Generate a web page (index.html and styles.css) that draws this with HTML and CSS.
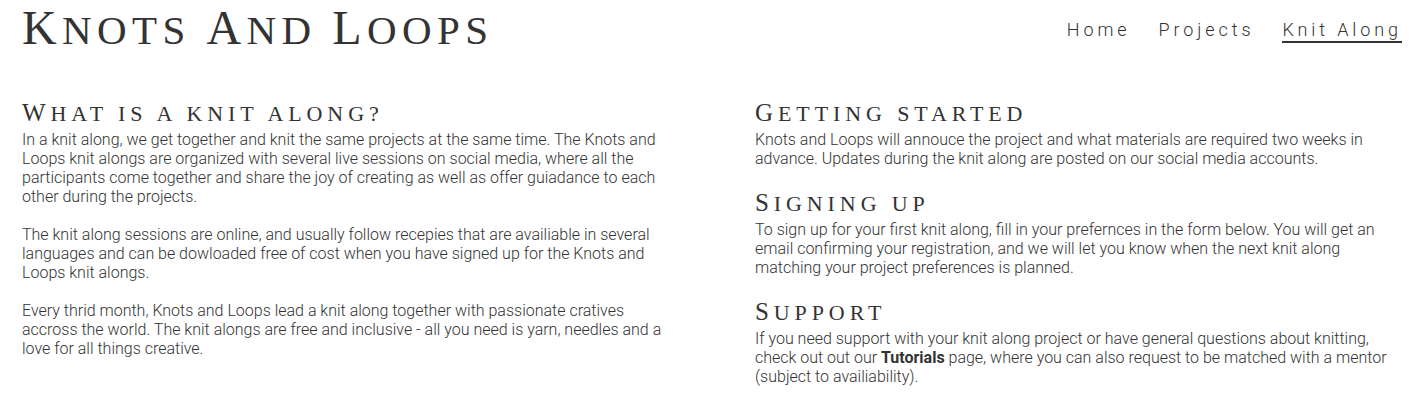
FILE: index.html
```html
<!DOCTYPE html>
<html lang="en">
<head>
<meta charset="utf-8">
<title>Knots And Loops – Knit Along</title>
<link rel="stylesheet" href="styles.css">
</head>
<body>
<header class="site-header">
  <h1 class="logo"><span class="word">Knots</span> <span class="word">And</span> <span class="word">Loops</span></h1>
  <nav class="nav">
    <a class="nav-link" href="#">Home</a>
    <a class="nav-link" href="#">Projects</a>
    <a class="nav-link active" href="#">Knit Along</a>
  </nav>
</header>
<main class="content">
  <section class="column">
    <h2 class="section-title">What is a knit along?</h2>
    <p>In a knit along, we get together and knit the same projects at the same time. The Knots and Loops knit alongs are organized with several live sessions on social media, where all the participants come together and share the joy of creating as well as offer guiadance to each other during the projects.</p>
    <p>The knit along sessions are online, and usually follow recepies that are availiable in several languages and can be dowloaded free of cost when you have signed up for the Knots and Loops knit alongs.</p>
    <p>Every thrid month, Knots and Loops lead a knit along together with passionate cratives accross the world. The knit alongs are free and inclusive - all you need is yarn, needles and a love for all things creative.</p>
  </section>
  <section class="column">
    <div class="block">
      <h2 class="section-title">Getting started</h2>
      <p>Knots and Loops will annouce the project and what materials are required two weeks in advance. Updates during the knit along are posted on our social media accounts.</p>
    </div>
    <div class="block">
      <h2 class="section-title">Signing up</h2>
      <p>To sign up for your first knit along, fill in your prefernces in the form below. You will get an email confirming your registration, and we will let you know when the next knit along matching your project preferences is planned.</p>
    </div>
    <div class="block">
      <h2 class="section-title">Support</h2>
      <p>If you need support with your knit along project or have general questions about knitting, check out out our <strong>Tutorials</strong> page, where you can also request to be matched with a mentor (subject to availiability).</p>
    </div>
  </section>
</main>
</body>
</html>
```

FILE: styles.css
```css
* { box-sizing: border-box; }

html, body {
  margin: 0;
  padding: 0;
  background: #ffffff;
}

body {
  font-family: Roboto, "Liberation Sans", sans-serif;
  font-weight: 300;
  font-size: 16px;
  line-height: 19px;
  color: #333333;
}

.site-header {
  display: flex;
  justify-content: space-between;
  align-items: flex-start;
  padding: 0 12px 0 22px;
  height: 56px;
}

.logo {
  margin: 0;
  font-family: "Liberation Serif", "Times New Roman", serif;
  font-weight: 400;
  font-size: 41px;
  line-height: 56px;
  letter-spacing: 5.4px;
  text-transform: uppercase;
  color: #333333;
  white-space: nowrap;
}

.logo .word {
  display: inline-block;
}

.logo .word::first-letter {
  font-size: 48px;
}

.nav {
  display: flex;
  gap: 28px;
  padding-top: 20px;
}

.nav-link {
  font-family: Roboto, "Liberation Sans", sans-serif;
  font-weight: 300;
  font-size: 18px;
  line-height: 20px;
  letter-spacing: 3.9px;
  color: #333333;
  text-decoration: none;
  padding-bottom: 1px;
  border-bottom: 2px solid transparent;
}

.nav-link.active {
  border-bottom-color: #333333;
}

.content {
  display: grid;
  grid-template-columns: 1fr 1fr;
  column-gap: 88px;
  padding: 42px 14px 0 22px;
}

.section-title {
  margin: 0 0 2px 0;
  font-family: "Liberation Serif", "Times New Roman", serif;
  font-weight: 400;
  font-size: 22px;
  line-height: 29px;
  letter-spacing: 4.9px;
  text-transform: uppercase;
  color: #333333;
}

.section-title::first-letter {
  font-size: 25px;
}

.column p {
  margin: 0 0 19px 0;
}

.block {
  margin-bottom: 20px;
}

.block p {
  margin: 0;
}

strong {
  font-weight: 700;
}
```
